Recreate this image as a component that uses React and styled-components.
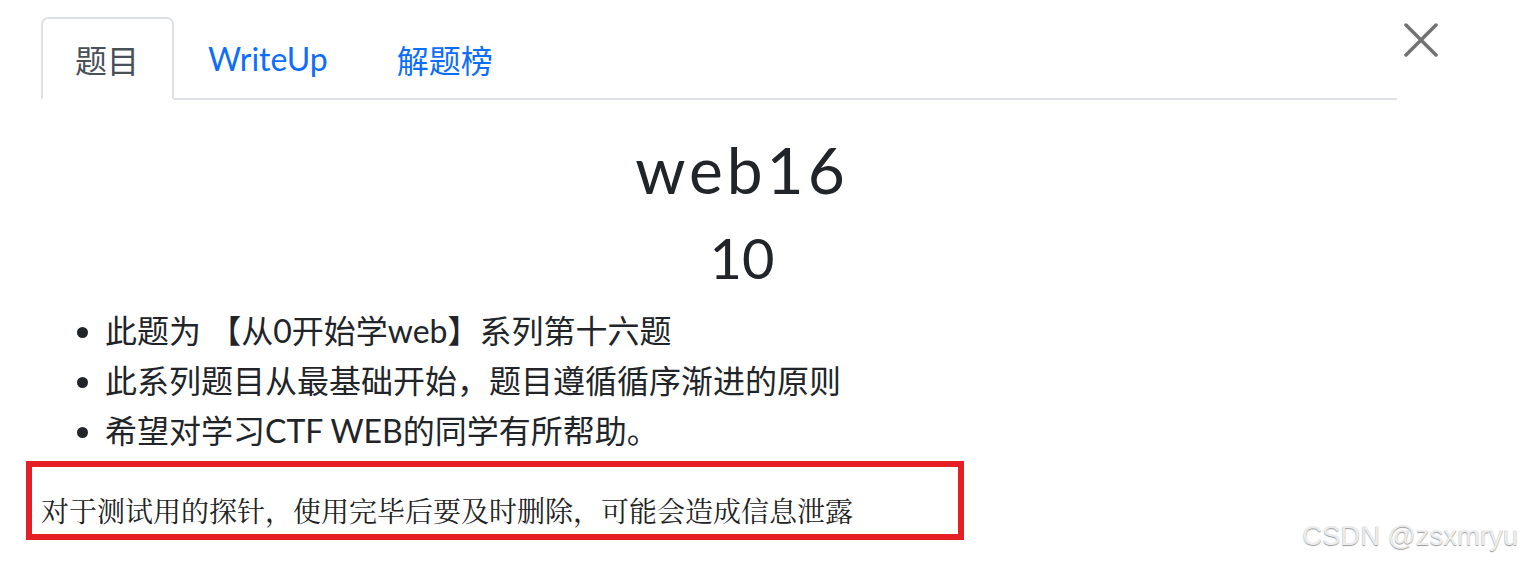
import React from "react";
import styled, { createGlobalStyle } from "styled-components";

const Global = createGlobalStyle`
  html, body { margin: 0; padding: 0; background: #fff; }
  body { font-family: Lato, "Noto Sans CJK SC", sans-serif; color: #212529; }
  * { box-sizing: border-box; }
`;

const Page = styled.div`
  width: 1522px;
  height: 564px;
  position: relative;
  overflow: hidden;
  padding: 17px 79px 0 41px;
`;

const Header = styled.div`
  display: flex;
  align-items: flex-start;
`;

const Nav = styled.ul`
  display: flex;
  flex: 1;
  margin: 0 8px 0 0;
  padding: 0;
  list-style: none;
  border-bottom: 2px solid #dee2e6;
`;

const Tab = styled.li`
  margin-bottom: -2px;
  padding: 0 33px 0 32px;
  height: 83px;
  display: flex;
  align-items: center;
  font-size: 32px;
  font-family: Lato, "Noto Sans CJK SC", sans-serif;
  color: ${(p) => (p.$active ? "#495057" : "#0d6efd")};
  border: 2px solid ${(p) => (p.$active ? "#dee2e6" : "transparent")};
  border-bottom-color: ${(p) => (p.$active ? "#fff" : "transparent")};
  border-radius: 7px 7px 0 0;
  background: ${(p) => (p.$active ? "#fff" : "transparent")};
`;

const Close = styled.button`
  width: 38px;
  height: 46px;
  border: 0;
  background: transparent;
  padding: 0;
  margin: 0 3px 0 -3px;
  display: flex;
  align-items: center;
  justify-content: center;
  opacity: 0.55;
`;

const Body = styled.div`
  display: flex;
  flex-direction: column;
`;

const Title = styled.h1`
  margin: 35px 0 0;
  text-align: center;
  font-family: Lato, sans-serif;
  font-weight: 400;
  font-size: 64px;
  letter-spacing: 4px;
  line-height: 70px;
  color: #212529;
`;

const Score = styled.h3`
  margin: 20px 0 0;
  text-align: center;
  font-family: Lato, sans-serif;
  font-weight: 400;
  font-size: 56px;
  line-height: 66px;
  color: #212529;
`;

const List = styled.ul`
  margin: 15px 0 0;
  padding-left: 64px;
  font-size: 32px;
  line-height: 50px;
  font-family: Lato, "Noto Sans CJK SC", sans-serif;
  color: #212529;
`;

const Note = styled.div`
  margin-left: -15px;
  width: 938px;
  height: 79px;
  border: 6px solid #e61e25;
  margin-top: 5px;
  display: flex;
  align-items: flex-end;
  padding: 0 0 4px 9px;
  font-family: "Liberation Serif", "Noto Serif CJK SC", "Noto Sans CJK SC", serif;
  font-size: 28px;
  line-height: 34px;
  color: #222;
`;

const Watermark = styled.div`
  position: absolute;
  right: 4px;
  bottom: 12px;
  font-family: "Liberation Sans", Arial, sans-serif;
  font-size: 27.5px;
  color: #ececec;
  text-shadow: 0 1px 1px #9a9a9a;
`;

export default function App() {
  return (
    <Page>
      <Global />
      <Header>
        <Nav>
          <Tab $active>题目</Tab>
          <Tab>WriteUp</Tab>
          <Tab>解题榜</Tab>
        </Nav>
        <Close aria-label="close">
          <svg width="34" height="34" viewBox="0 0 34 34">
            <path d="M2 2 L32 32 M32 2 L2 32" stroke="#000" strokeWidth="3.5" strokeLinecap="round" />
          </svg>
        </Close>
      </Header>
      <Body>
        <Title>web16</Title>
        <Score>10</Score>
        <List>
          <li>此题为 【从0开始学web】系列第十六题</li>
          <li>此系列题目从最基础开始，题目遵循循序渐进的原则</li>
          <li>希望对学习CTF WEB的同学有所帮助。</li>
        </List>
        <Note>对于测试用的探针，使用完毕后要及时删除，可能会造成信息泄露</Note>
      </Body>
      <Watermark>CSDN @zsxmryu</Watermark>
    </Page>
  );
}
